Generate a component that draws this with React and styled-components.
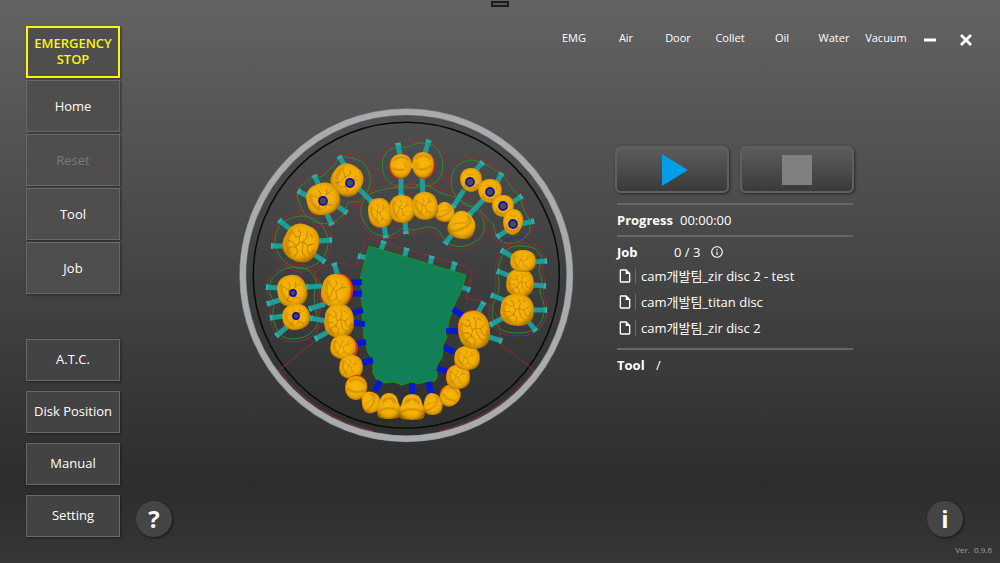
import styled, { createGlobalStyle } from "styled-components";
import { MdOutlineInfo, MdOutlineInsertDriveFile } from "react-icons/md";

const GlobalStyle = createGlobalStyle`
  * {
    box-sizing: border-box;
  }

  body {
    margin: 0;
    background: #333;
    color: #fff;
    font-family: "Open Sans", "Noto Sans CJK KR", sans-serif;
    font-size: 13px;
  }

  button {
    font-family: inherit;
    color: inherit;
    padding: 0;
    cursor: pointer;
  }

  ul {
    list-style: none;
    margin: 0;
    padding: 0;
  }
`;

const Page = styled.div`
  position: relative;
  display: flex;
  gap: 16px;
  min-height: 100vh;
  padding: 26px 0 0 26px;
  background: linear-gradient(#636363 0%, #2d2d2d 86%, #363636 100%);
`;

const Handle = styled.div`
  position: absolute;
  top: 1px;
  left: 50%;
  width: 18px;
  height: 6px;
  margin-left: -9px;
  border: 2px solid #1c1c1c;
  background: #555;
`;

const Sidebar = styled.nav`
  flex: none;
  display: flex;
  flex-direction: column;
  gap: 45px;
  width: 94px;
`;

const ButtonGroup = styled.div`
  display: grid;
  gap: ${(props) => props.$gap}px;
`;

const MenuButton = styled.button`
  height: 52px;
  border: 1px solid #66686a;
  background: #4f4e4c;
  box-shadow: 1px 1px 2px rgba(20, 20, 30, 0.6);
  font-size: 13px;
  line-height: 16px;

  &:disabled {
    color: #7b7b7b;
    cursor: default;
  }
`;

const EmergencyButton = styled(MenuButton)`
  padding-bottom: 2px;
  border: 2px solid #f8f80a;
  color: #f8f80a;
  font-weight: 600;
`;

const SmallMenuButton = styled(MenuButton)`
  height: 42px;
  padding-bottom: 2px;
  background: #434343;
`;

const Main = styled.main`
  flex: 1;
  min-width: 0;
  display: flex;
  flex-direction: column;
`;

const Header = styled.header`
  display: flex;
  justify-content: flex-end;
  align-items: center;
  height: 24px;
  padding-right: 16px;
`;

const StatusList = styled.ul`
  display: flex;
`;

const StatusItem = styled.li`
  width: 52px;
  text-align: center;
  font-size: 11px;
  line-height: 24px;
`;

const WindowButton = styled.button`
  display: flex;
  align-items: center;
  justify-content: center;
  width: 36px;
  height: 24px;
  padding-top: 4px;
  border: 0;
  background: none;
`;

const Workspace = styled.div`
  display: flex;
  justify-content: center;
  gap: 40px;
  padding: 58px 43px 16px 0;
`;

const DiskView = styled.svg`
  flex: none;
  width: 336px;
  height: 336px;
`;

const Panel = styled.section`
  width: 239px;
  padding-top: 38px;
`;

const Controls = styled.div`
  display: flex;
  gap: 11px;
  margin-bottom: 10px;
`;

const ControlButton = styled.button`
  flex: 1;
  display: flex;
  align-items: center;
  justify-content: center;
  height: 47px;
  border: 2px solid #606060;
  border-radius: 6px;
  background: linear-gradient(#5c5c5c, #3a3a3a);
  box-shadow: 1px 1px 3px rgba(0, 0, 0, 0.5);
`;

const Section = styled.div`
  margin: 0 1px 0 2px;
  padding: 4px 0;
  border-top: 2px solid #676767;
`;

const Row = styled.div`
  display: flex;
  align-items: center;
  height: 22px;
`;

const Label = styled.span`
  min-width: ${(props) => props.$width}px;
  font-weight: 700;
`;

const InfoButton = styled.button`
  display: flex;
  margin-left: 10px;
  border: 0;
  background: none;
`;

const FileList = styled.ul`
  padding-bottom: 3px;
`;

const FileItem = styled.li`
  display: flex;
  align-items: center;
  height: 26px;

  span {
    margin-left: 2px;
    padding-left: 5px;
    border-left: 1px solid #6a6a6a;
    line-height: 16px;
    white-space: nowrap;
  }
`;

const Footer = styled.footer`
  margin-top: auto;
`;

const FooterButtons = styled.div`
  display: flex;
  justify-content: space-between;
  padding-right: 37px;
`;

const RoundButton = styled.button`
  width: 36px;
  height: 36px;
  border: 0;
  border-radius: 50%;
  background: #454545;
  box-shadow: 1px 1px 3px rgba(0, 0, 0, 0.6);
  font-size: 24px;
  font-weight: 700;
  line-height: 36px;
`;

const Version = styled.div`
  height: 26px;
  padding-right: 8px;
  color: #a0a0a0;
  font-size: 8px;
  line-height: 26px;
  text-align: right;
  white-space: pre;
`;

const STATUSES = ["EMG", "Air", "Door", "Collet", "Oil", "Water", "Vacuum"];

const JOBS = [
  "cam개발팀_zir disc 2 - test",
  "cam개발팀_titan disc",
  "cam개발팀_zir disc 2",
];

// cx, cy, rx, ry, rotation, kind, offset of the red edge
const TEETH = [
  [347, 180, 16, 16, 30, "molar"],
  [323, 199, 17, 16, -20, "molar"],
  [301, 243, 18, 19, 20, "fissured"],
  [380, 213, 12, 15, -12, "molar"],
  [401, 166, 11, 12, 0, "dome", [-0.8, 0.8]],
  [423, 165, 11, 13, 0, "dome", [0.8, 0.8]],
  [402, 209, 13, 14, 0, "molar"],
  [445, 212, 10, 10, 10, "front"],
  [425, 206, 13, 14, -10, "molar"],
  [462, 225, 14, 14, 15, "front"],
  [471, 180, 11, 12, 0, "smooth"],
  [490, 191, 12, 12, 0, "smooth"],
  [503, 206, 11, 11, 0, "smooth"],
  [513, 222, 10, 13, 8, "smooth"],
  [520, 283, 14, 14, 0, "fissured"],
  [523, 261, 13, 11, 0, "molar"],
  [517, 310, 17, 16, 0, "fissured"],
  [292, 291, 15, 16, -15, "molar"],
  [296, 317, 14, 13, -15, "molar"],
  [336, 291, 15, 17, 8, "molar", [2, -1]],
  [339, 321, 15, 17, 0, "fissured"],
  [343, 347, 13, 12, 0, "molar", [2, 1]],
  [351, 367, 12, 12, 0, "molar"],
  [356, 388, 11, 12, 10, "dome", [0, -1]],
  [371, 402, 10, 11, -20, "front"],
  [433, 404, 10, 11, 0, "front"],
  [450, 396, 10, 11, 35, "dome", [-1, -1]],
  [458, 377, 12, 12, 0, "molar", [0, -1]],
  [467, 358, 13, 12, 0, "molar"],
  [474, 330, 16, 19, -8, "fissured", [0, -1]],
  [389, 406, 12, 13, 0, "incisor"],
  [412, 407, 13, 13, 0, "incisor"],
];

// x, y, radius
const HOLES = [
  [350, 183, 4],
  [323, 201, 4],
  [470, 182, 4],
  [490, 192, 4],
  [503, 206, 4],
  [513, 224, 4],
  [293, 293, 3],
  [296, 316, 3],
];

// x1, y1 is the outer end, with the cap
const SUPPORTS = [
  [339, 156, 346, 168], [314, 175, 320, 187], [298, 191, 309, 197],
  [347, 213, 336, 205], [332, 225, 326, 212], [372, 202, 357, 187],
  [279, 220, 290, 229], [271, 246, 285, 246], [332, 240, 318, 241],
  [325, 262, 312, 253], [386, 238, 384, 225], [398, 143, 400, 156],
  [401, 196, 401, 176], [406, 234, 405, 220], [429, 140, 425, 153],
  [423, 194, 422, 176], [453, 207, 464, 190], [469, 215, 484, 199],
  [483, 162, 474, 172], [502, 173, 496, 184], [522, 196, 510, 204],
  [534, 221, 521, 224], [497, 237, 508, 230], [445, 244, 453, 233],
  [501, 250, 513, 257], [547, 261, 534, 262], [497, 271, 510, 276],
  [546, 286, 532, 285], [491, 295, 504, 300], [547, 310, 533, 310],
  [536, 331, 527, 320], [490, 325, 503, 318], [484, 302, 477, 314],
  [502, 341, 489, 337], [266, 287, 279, 288], [267, 304, 280, 300],
  [270, 318, 284, 316], [276, 336, 287, 327], [306, 287, 322, 286],
  [309, 309, 325, 304], [310, 318, 326, 321], [315, 339, 328, 332],
  [334, 263, 338, 276], [384, 241, 381, 250], [358, 256, 368, 258],
  [407, 248, 404, 258], [432, 256, 430, 265], [455, 262, 452, 272],
  [470, 290, 461, 287],
];

const BLUE_PINS = [
  [350, 283, 362, 282], [350, 293, 362, 294], [353, 313, 363, 310],
  [354, 323, 365, 324], [356, 344, 366, 342], [362, 363, 373, 360],
  [375, 391, 380, 381], [412, 383, 412, 395], [428, 382, 432, 395],
  [437, 368, 448, 372], [444, 347, 454, 352], [446, 331, 458, 331],
  [453, 309, 463, 316],
];

const CONTOURS = [
  [[347, 157], [363, 163], [370, 177], [368, 190], [360, 201], [348, 203], [343, 215], [333, 222], [318, 223], [306, 215], [299, 202], [298, 190], [310, 179], [322, 176], [332, 167], [338, 160]],
  [[301, 216], [319, 222], [328, 240], [322, 259], [303, 269], [284, 261], [275, 243], [281, 224]],
  [[294, 267], [308, 270], [316, 281], [314, 297], [316, 312], [317, 325], [308, 335], [294, 339], [282, 336], [275, 325], [273, 312], [274, 303], [270, 293], [271, 281], [280, 271]],
  [[398, 147], [408, 147], [415, 144], [424, 143], [435, 147], [442, 158], [442, 172], [436, 182], [426, 186], [412, 184], [401, 187], [389, 182], [383, 172], [383, 160], [388, 151]],
  [[364, 200], [372, 193], [386, 189], [402, 187], [412, 188], [425, 185], [441, 193], [452, 196], [462, 201], [475, 209], [484, 222], [481, 237], [468, 245], [455, 246], [445, 240], [438, 230], [428, 227], [414, 230], [403, 228], [394, 234], [384, 236], [372, 232], [363, 220], [361, 209]],
  [[470, 160], [482, 163], [492, 168], [503, 176], [511, 187], [519, 196], [524, 210], [530, 222], [528, 234], [518, 242], [506, 243], [497, 237], [493, 224], [484, 215], [477, 208], [465, 205], [455, 195], [451, 182], [456, 167]],
  [[522, 246], [535, 249], [542, 259], [539, 270], [542, 281], [540, 292], [544, 305], [542, 320], [533, 330], [518, 333], [502, 330], [493, 319], [493, 305], [498, 294], [499, 283], [498, 270], [502, 256], [510, 248]],
];

// closed smooth curve through the points, pushed outwards by offset
function contourPath(points, offset) {
  const count = points.length;
  const moved = points.map(([x, y], i) => {
    const prev = points[(i + count - 1) % count];
    const next = points[(i + 1) % count];
    const dx = next[0] - prev[0];
    const dy = next[1] - prev[1];
    const length = Math.hypot(dx, dy);
    return [x + (dy / length) * offset, y - (dx / length) * offset];
  });
  let path = `M${moved[0]}`;
  for (let i = 0; i < count; i++) {
    const p0 = moved[(i + count - 1) % count];
    const p1 = moved[i];
    const p2 = moved[(i + 1) % count];
    const p3 = moved[(i + 2) % count];
    path += `C${p1[0] + (p2[0] - p0[0]) / 6},${p1[1] + (p2[1] - p0[1]) / 6}`;
    path += ` ${p2[0] - (p3[0] - p1[0]) / 6},${p2[1] - (p3[1] - p1[1]) / 6} ${p2}`;
  }
  return `${path}Z`;
}

const ROUNDED =
  "M-3-9.800C-1-10.200 1-9.900 3-9.700C6.500-9 9.200-6 9.600-3C10.100-1 9.900 1.500 9.600 4C8.500 7.500 6 9.300 3 9.800C1 10.200-1.500 9.900-4 9.300C-7.500 8-9.400 6-9.700 3C-10.100 1-9.600-1.500-9.200-4C-8.300-7-6-9.200-3-9.800Z";
const OVAL =
  "M0-10C5.500-10 9.800-7 9.900-1C10 5.500 5.500 10 0.500 10C-5.500 10-9.800 5.500-9.900-1C-9.800-7-5.500-10 0-10Z";

// drawn in a box from -10 to 10: outline, thin grooves, soft shadow
const SHAPES = {
  molar: {
    outline: ROUNDED,
    fine: "M-5-4L-2-1L0 0L3-2L6-3M-2-1L-3 3L-5 5M0 0L1 4L4 6M-1-6L0-4L-2-1M3-2L4-5M1 4L-1 6",
    soft: "M-6-5C-8-1-6 4-3 6",
  },
  fissured: {
    outline: ROUNDED,
    fine: "M-6-4L-4-2L-2-3L-1 0L1-1L2-4L1-7M-1 0L-2 3L-5 4L-6 6M-2 3L0 5L-1 8M1-1L4 0L7-2M4 0L5 3L7 4M2 3L3 5L5 6M-4-6L-2-5L-2-3M2 3L1-1M3-6L5-5M-7 1L-4 1L-2 3",
    soft: "M-7-4C-9 0-7 5-4 7M4 8C7 7 8 4 8 2",
  },
  smooth: {
    outline: OVAL,
    fine: "M-4-5L-1-4L2-5M-6 2L-5 5M5-4L6-1",
    soft: "M-6 5C-2 8 3 8 6 4",
  },
  dome: {
    outline: OVAL,
    fine: "",
    soft: "M-6-5C-3-8 3-8 6-5M-7 2C-3 4 3 4 7 1",
  },
  front: {
    outline:
      "M-2-10C2-10.300 5-8 8-5C10-2.500 10 2 9.300 5C8 8.500 5 9.600 1 9.900C-3 10.200-7 9.500-9 6.500C-10.300 3.500-9.500 0-8.500-3C-7.500-7-5.500-9.500-2-10Z",
    fine: "M-6 1L-2-1L2-2L4-6",
    soft: "M-7 6C-3 6 3 2 5-3C6-5 4-6 2-7",
  },
  incisor: {
    outline:
      "M0-10C4-9.800 6.500-8 7.500-4C7.800-1.500 9.500-0.500 9.900 3C10 6.500 9.500 8.500 7.500 9.300C3 10.200-3 10.200-7.500 9.300C-9.500 8.500-10 6.500-9.900 3C-9.500-0.500-7.800-1.500-7.500-4C-6.500-8-4-9.800 0-10Z",
    fine: "M-3-5L-2-3M2-6L3-3",
    soft: "M-5-3C-4-7 4-7 5-3M-8 4C-4 1 4 1 8 4",
  },
};

function Tooth({ cx, cy, rx, ry, angle, kind, edge }) {
  const { outline, fine, soft } = SHAPES[kind];
  return (
    <>
      {edge && (
        <ellipse
          cx={cx + edge[0]}
          cy={cy + edge[1]}
          rx={rx}
          ry={ry}
          transform={`rotate(${angle} ${cx} ${cy})`}
          fill="#f0280e"
        />
      )}
      <g
        transform={`translate(${cx} ${cy}) rotate(${angle}) scale(${rx / 10} ${ry / 10})`}
        fill="none"
        strokeLinecap="round"
        strokeLinejoin="round"
      >
        <path d={outline} fill="url(#enamel)" />
        <path d={soft} stroke="#b47600" strokeWidth="2" opacity="0.400" />
        {fine && <path d={fine} stroke="#9a6400" strokeWidth="0.500" opacity="0.600" />}
      </g>
    </>
  );
}

function Support({ line }) {
  const [x1, y1, x2, y2] = line;
  const length = Math.hypot(x2 - x1, y2 - y1);
  const ux = (x2 - x1) / length;
  const uy = (y2 - y1) / length;
  return (
    <g fill="none">
      <path d={`M${x1} ${y1}L${x2} ${y2}`} stroke="#1f9c97" strokeWidth="5" />
      <path
        d={`M${x1} ${y1}L${x1 + ux * 3} ${y1 + uy * 3}`}
        stroke="#35c4bd"
        strokeWidth="6"
        strokeDasharray="0.700 0.800"
      />
    </g>
  );
}

function Disk() {
  return (
    <DiskView viewBox="239 108 336 336" role="img" aria-label="Disk preview">
      <defs>
        <radialGradient id="enamel" cx="0.480" cy="0.450" r="0.580">
          <stop offset="0" stopColor="#f9b70a" />
          <stop offset="0.620" stopColor="#f3ae04" />
          <stop offset="0.820" stopColor="#dc9a00" />
          <stop offset="1" stopColor="#9c6800" />
        </radialGradient>
      </defs>
      <circle cx="406.300" cy="275.300" r="163.500" fill="#000" fillOpacity="0.080" />
      <circle cx="406.300" cy="275.300" r="163.500" fill="none" stroke="#6d8391" strokeWidth="7" />
      <circle cx="406.300" cy="275.300" r="163.500" fill="none" stroke="#ababab" strokeWidth="5.800" />
      <circle cx="406.300" cy="275.300" r="153" fill="none" stroke="#060c06" strokeWidth="1.500" />

      <g fill="none">
        {CONTOURS.map((points, i) => (
          <g key={i}>
            <path d={contourPath(points, 3)} stroke="#932d31" />
            <path d={contourPath(points, 0)} stroke="#2a8e33" />
          </g>
        ))}
        <path
          d="M279 370L319 338M314 272Q330 263 345 263L354 267L358 262L364 243Q366 238 372 239L468 267Q474 269 472 275L466 299Q480 298 491 307Q501 316 500 344L534 370M279 370A159.500 159.500 0 0 0 374 431M534 370A159.500 159.500 0 0 1 439 431M314 272Q322 290 320 312Q315 328 319 338"
          stroke="#932d31"
        />
        <path d="M503 242Q515 234 527 240M508 335Q524 341 535 333" stroke="#2c2ca0" />
      </g>

      {SUPPORTS.map((line, i) => (
        <Support key={i} line={line} />
      ))}
      <path
        d="M369 246L466 275L463 285L459 296L455 303L453 310L449 320L448 327L446 332L447 338L443 344L443 350L442 358L438 363L437 369L437 377L435 381L425 382L418 384L411 382L402 385L394 382L384 383L377 380L373 373L373 362L371 357L368 353L366 346L364 340L364 330L362 325L363 310L361 298L362 290L360 283L361 275Z"
        fill="#128057"
        stroke="#1c921c"
      />
      <g stroke="#0519d3" strokeWidth="6">
        {BLUE_PINS.map(([x1, y1, x2, y2], i) => (
          <path key={i} d={`M${x1} ${y1}L${x2} ${y2}`} />
        ))}
      </g>

      {TEETH.map(([cx, cy, rx, ry, angle, kind, edge], i) => (
        <Tooth key={i} cx={cx} cy={cy} rx={rx} ry={ry} angle={angle} kind={kind} edge={edge} />
      ))}
      <path d="M404 162Q412 165 419 161V169Q412 167 404 170Z" fill="#e9a405" />

      {HOLES.map(([x, y, r], i) => (
        <circle key={i} cx={x} cy={y} r={r} fill="#4c4c50" stroke="#1212b4" strokeWidth="1.800" />
      ))}
    </DiskView>
  );
}

export default function App() {
  return (
    <>
      <GlobalStyle />
      <Page>
        <Handle />
        <Sidebar>
          <ButtonGroup $gap={2}>
            <EmergencyButton>
              EMERGENCY
              <br />
              STOP
            </EmergencyButton>
            <MenuButton>Home</MenuButton>
            <MenuButton disabled>Reset</MenuButton>
            <MenuButton>Tool</MenuButton>
            <MenuButton>Job</MenuButton>
          </ButtonGroup>
          <ButtonGroup $gap={10}>
            <SmallMenuButton>A.T.C.</SmallMenuButton>
            <SmallMenuButton>Disk Position</SmallMenuButton>
            <SmallMenuButton>Manual</SmallMenuButton>
            <SmallMenuButton>Setting</SmallMenuButton>
          </ButtonGroup>
        </Sidebar>
        <Main>
          <Header>
            <StatusList>
              {STATUSES.map((status) => (
                <StatusItem key={status}>{status}</StatusItem>
              ))}
            </StatusList>
            <WindowButton aria-label="Minimize">
              <svg width="12" height="12" viewBox="0 0 12 12" stroke="#fff" strokeWidth="3">
                <path d="M0 6H12" />
              </svg>
            </WindowButton>
            <WindowButton aria-label="Close">
              <svg width="12" height="12" viewBox="0 0 12 12" stroke="#fff" strokeWidth="2.800">
                <path d="M1 1L11 11M11 1L1 11" />
              </svg>
            </WindowButton>
          </Header>
          <Workspace>
            <Disk />
            <Panel>
              <Controls>
                <ControlButton aria-label="Start">
                  <svg width="32" height="32" viewBox="0 0 32 32">
                    <path d="M6 0L32 16L6 32Z" fill="#009fe8" />
                  </svg>
                </ControlButton>
                <ControlButton aria-label="Stop">
                  <svg width="30" height="30" viewBox="0 0 30 30">
                    <path d="M0 0H30V30H0Z" fill="#808080" />
                  </svg>
                </ControlButton>
              </Controls>
              <Section>
                <Row>
                  <Label $width={63}>Progress</Label>
                  <span>00:00:00</span>
                </Row>
              </Section>
              <Section>
                <Row>
                  <Label $width={57}>Job</Label>
                  <span>0 / 3</span>
                  <InfoButton aria-label="Job details">
                    <MdOutlineInfo size={14} />
                  </InfoButton>
                </Row>
                <FileList>
                  {JOBS.map((job) => (
                    <FileItem key={job}>
                      <MdOutlineInsertDriveFile size={16} />
                      <span>{job}</span>
                    </FileItem>
                  ))}
                </FileList>
              </Section>
              <Section>
                <Row>
                  <Label $width={39}>Tool</Label>
                  <span>/</span>
                </Row>
              </Section>
            </Panel>
          </Workspace>
          <Footer>
            <FooterButtons>
              <RoundButton aria-label="Help">?</RoundButton>
              <RoundButton aria-label="Information">i</RoundButton>
            </FooterButtons>
            <Version>Ver.  0.9.6</Version>
          </Footer>
        </Main>
      </Page>
    </>
  );
}
